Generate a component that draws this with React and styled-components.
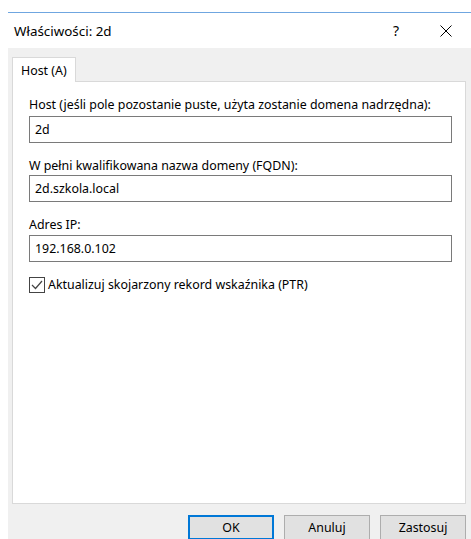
import React from "react";
import styled, { createGlobalStyle } from "styled-components";

const GlobalStyle = createGlobalStyle`
  html, body {
    margin: 0;
    padding: 0;
    background: #ffffff;
    overflow: hidden;
  }
  body {
    font-family: "Noto Sans", "Liberation Sans", sans-serif;
    font-size: 12.4px;
    color: #000000;
  }
`;

const Window = styled.div`
  margin: 12px 0 0 8px;
  width: 463px;
  border-top: 1px solid #6fa6e0;
  background: #f0f0f0;
`;

const TitleBar = styled.div`
  display: flex;
  align-items: center;
  height: 35px;
  padding-left: 6px;
  background: #ffffff;
`;

const Title = styled.div`
  flex: 1;
  font-size: 13.4px;
  line-height: 16px;
`;

const TitleButton = styled.div`
  display: flex;
  align-items: center;
  justify-content: center;
  width: 50px;
  height: 100%;
  font-size: 14px;
`;

const Body = styled.div`
  padding: 9px 5px 0 4px;
`;

const Tabs = styled.div`
  display: flex;
`;

const Tab = styled.div`
  height: 24px;
  padding: 0 8px 0 8px;
  display: flex;
  align-items: center;
  background: #ffffff;
  border: 1px solid #d9d9d9;
  border-bottom: none;
  margin-bottom: -1px;
  position: relative;
  z-index: 1;
`;

const Panel = styled.div`
  height: 423px;
  box-sizing: border-box;
  background: #ffffff;
  border: 1px solid #d9d9d9;
  padding: 15px 13px 0 16px;
  display: flex;
  flex-direction: column;
  gap: 15px;
`;

const Field = styled.div`
  display: flex;
  flex-direction: column;
`;

const Label = styled.label`
  line-height: 16px;
  margin-bottom: ${(p) => p.$gap}px;
`;

const Input = styled.div`
  height: 27px;
  box-sizing: border-box;
  border: 1px solid #7a7a7a;
  padding: 0 5px;
  display: flex;
  align-items: center;
  background: #ffffff;
`;

const CheckRow = styled.div`
  display: flex;
  align-items: center;
  gap: 3px;
  line-height: 16px;
`;

const Buttons = styled.div`
  display: flex;
  justify-content: flex-end;
  gap: 10px;
  padding: 11px 0 8px;
`;

const Button = styled.div`
  width: 86px;
  height: 25px;
  box-sizing: border-box;
  display: flex;
  align-items: center;
  justify-content: center;
  background: #e1e1e1;
  border: ${(p) => (p.$primary ? "2px solid #0078d7" : "1px solid #adadad")};
`;

const CloseIcon = () => (
  <svg width="12" height="12" viewBox="0 0 12 12">
    <path d="M0.5 0.5 L11.5 11.5 M11.5 0.5 L0.5 11.5" stroke="#000" strokeWidth="1" />
  </svg>
);

const CheckBox = () => (
  <svg width="16" height="16" viewBox="0 0 16 16">
    <rect x="0.5" y="0.5" width="15" height="15" fill="#fff" stroke="#444" />
    <path d="M3 8 L6.5 11.5 L13 4" fill="none" stroke="#444" strokeWidth="1.2" />
  </svg>
);

const fields = [
  {
    label: "Host (jeśli pole pozostanie puste, użyta zostanie domena nadrzędna):",
    value: "2d",
    gap: 3,
  },
  { label: "W pełni kwalifikowana nazwa domeny (FQDN):", value: "2d.szkola.local", gap: 1 },
  { label: "Adres IP:", value: "192.168.0.102", gap: 2 },
];

export default function App() {
  return (
    <>
      <GlobalStyle />
      <Window>
        <TitleBar>
          <Title>Właściwości: 2d</Title>
          <TitleButton>?</TitleButton>
          <TitleButton>
            <CloseIcon />
          </TitleButton>
        </TitleBar>
        <Body>
          <Tabs>
            <Tab>Host (A)</Tab>
          </Tabs>
          <Panel>
            {fields.map((f) => (
              <Field key={f.label}>
                <Label $gap={f.gap}>{f.label}</Label>
                <Input>{f.value}</Input>
              </Field>
            ))}
            <CheckRow>
              <CheckBox />
              <span>Aktualizuj skojarzony rekord wskaźnika (PTR)</span>
            </CheckRow>
          </Panel>
          <Buttons>
            <Button $primary>OK</Button>
            <Button>Anuluj</Button>
            <Button>Zastosuj</Button>
          </Buttons>
        </Body>
      </Window>
    </>
  );
}
